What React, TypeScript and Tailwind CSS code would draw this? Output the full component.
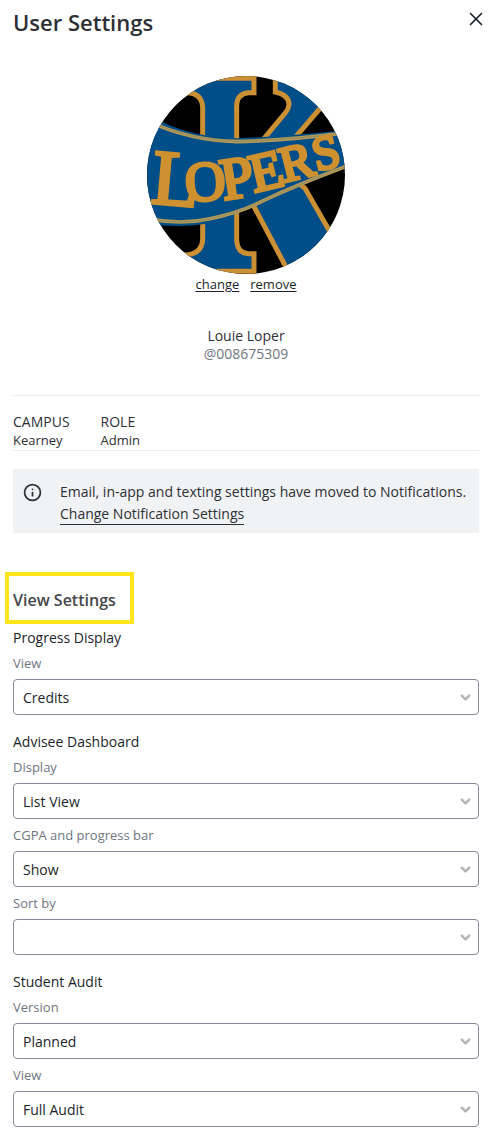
import { useId } from "react";
import { ChevronDown, Info, X } from "lucide-react";

type FieldProps = { label: string; value: string; options: string[] };

function Field({ label, value, options }: FieldProps) {
  const id = useId();
  return (
    <div>
      <label htmlFor={id} className="mb-[6px] block text-[13px] leading-5 text-[#6f7680]">
        {label}
      </label>
      <div className="grid items-center">
        <select
          id={id}
          defaultValue={value}
          className="col-start-1 row-start-1 h-9 w-full appearance-none rounded-[4px] border border-[#868b98] bg-white px-[9px] text-[14px] text-[#1b1f2a]"
        >
          {options.map((option) => (
            <option key={option}>{option}</option>
          ))}
        </select>
        <ChevronDown
          size={15}
          strokeWidth={4}
          className="pointer-events-none col-start-1 row-start-1 mr-[6px] justify-self-end text-[#b5b5b8]"
        />
      </div>
    </div>
  );
}

type SectionProps = { title: string; fields: FieldProps[] };

function Section({ title, fields }: SectionProps) {
  return (
    <section>
      <h3 className="mb-[5px] text-[14px] leading-5 text-[#1b1f2a]">{title}</h3>
      <div className="flex flex-col gap-[6px]">
        {fields.map((field) => (
          <Field key={field.label} {...field} />
        ))}
      </div>
    </section>
  );
}

const letters = [
  { char: "L", x: 30, y: 398, size: 234, angle: 5 },
  { char: "O", x: 138, y: 394, size: 168, angle: -3 },
  { char: "P", x: 251, y: 390, size: 178, angle: -9 },
  { char: "E", x: 343, y: 367, size: 162, angle: -13 },
  { char: "R", x: 433, y: 337, size: 150, angle: -14 },
  { char: "S", x: 530, y: 304, size: 144, angle: -14 },
];

function Avatar() {
  return (
    <svg viewBox="21 18 594 594" className="size-[198px]" role="img" aria-label="Lopers">
      <clipPath id="avatar-circle">
        <circle cx="318" cy="315" r="297" />
      </clipPath>
      <g clipPath="url(#avatar-circle)">
        <rect x="21" y="18" width="594" height="594" fill="#000" />
        <g fill="#004e87" stroke="#cb8f34" strokeWidth="15">
          <path d="M100 25H342V68H325Q290 72 290 108V510Q292 550 325 551H342V604H100V555H140Q188 550 188 505V110Q184 68 140 68H100Z" />
          <path d="M406 0V66Q447 75 447 103Q446 116 438 126L350 232L300 330L440 595L600 680L630 590L495 355L400 280L476 190L560 92L620 0Z" />
        </g>
        <path
          d="M10 135L66 156Q165 202 290 205Q450 198 640 178V280L575 308Q520 330 420 375Q290 435 210 458Q150 472 60 466L10 460Z"
          fill="#004e87"
        />
        <g fill="none" strokeLinecap="round">
          <path
            d="M40 160Q150 210 290 215Q450 211 640 185M30 446Q120 466 210 446Q300 428 370 392Q480 340 640 281"
            stroke="#b59a58"
            strokeWidth="11"
          />
          <path
            d="M40 160Q150 210 290 215Q450 211 640 185M30 446Q120 466 210 446Q300 428 370 392Q480 340 640 281"
            stroke="#7d8564"
            strokeWidth="2"
          />
        </g>
        <g
          fill="#cf912f"
          stroke="#cf912f"
          strokeWidth="10"
          className="font-['Liberation_Serif',serif]"
        >
          {letters.map(({ char, x, y, size, angle }) => (
            <text key={char} x={x} y={y} fontSize={size} transform={`rotate(${angle} ${x} ${y})`}>
              {char}
            </text>
          ))}
        </g>
      </g>
    </svg>
  );
}

const sections: SectionProps[] = [
  {
    title: "Progress Display",
    fields: [{ label: "View", value: "Credits", options: ["Credits"] }],
  },
  {
    title: "Advisee Dashboard",
    fields: [
      { label: "Display", value: "List View", options: ["List View"] },
      { label: "CGPA and progress bar", value: "Show", options: ["Show", "Hide"] },
      { label: "Sort by", value: "", options: [""] },
    ],
  },
  {
    title: "Student Audit",
    fields: [
      { label: "Version", value: "Planned", options: ["Planned"] },
      { label: "View", value: "Full Audit", options: ["Full Audit"] },
    ],
  },
];

export default function App() {
  return (
    <main className="bg-white pr-[17px] pb-[14px] pl-[13px] font-['Open_Sans','Noto_Sans',sans-serif] text-[14px] text-[#2d3035]">
      <header className="flex items-start justify-between pt-2">
        <h1 className="text-[22px] leading-7 font-semibold">User Settings</h1>
        <button type="button" aria-label="Close" className="-mr-2 text-[#1b1f2a]">
          <X size={22} strokeWidth={1.8} />
        </button>
      </header>

      <section className="mt-10 flex flex-col items-center">
        <Avatar />
        <div className="flex gap-[11px] text-[13px] leading-5 text-[#1b1f2a]">
          <a href="#change" className="underline underline-offset-2">
            change
          </a>
          <a href="#remove" className="underline underline-offset-2">
            remove
          </a>
        </div>
        <p className="mt-[33px] leading-[18px]">Louie Loper</p>
        <p className="leading-[18px] text-[#6f7680]">@008675309</p>
      </section>

      <dl className="mt-8 flex gap-[31px] border-y border-[#ececee] pt-[17px] pb-px leading-[18px]">
        <div>
          <dt>CAMPUS</dt>
          <dd className="text-[13px]">Kearney</dd>
        </div>
        <div>
          <dt>ROLE</dt>
          <dd className="text-[13px]">Admin</dd>
        </div>
      </dl>

      <aside className="mt-[18px] flex gap-[18px] bg-[#f1f2f4] pt-3 pb-2 pl-[10px] leading-[22px]">
        <Info size={19} strokeWidth={2.2} className="mt-[2px] shrink-0" />
        <div>
          <p>Email, in-app and texting settings have moved to Notifications.</p>
          <a href="#notifications" className="inline-block border-b border-[#2d3035] leading-5">
            Change Notification Settings
          </a>
        </div>
      </aside>

      <h2 className="mt-[39px] -ml-2 w-fit border-4 border-[#ffe51a] px-1 pt-3 pb-2 text-[16px] leading-6 font-semibold text-[#45474b]">
        <span className="pr-[10px]">View Settings</span>
      </h2>

      <div className="mt-1 flex flex-col gap-[17px]">
        {sections.map((section) => (
          <Section key={section.title} {...section} />
        ))}
      </div>
    </main>
  );
}
